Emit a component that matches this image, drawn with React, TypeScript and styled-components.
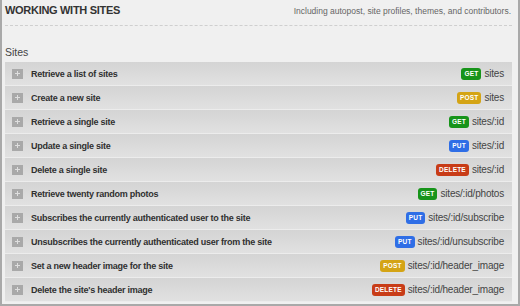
import React from 'react';
import styled, { createGlobalStyle } from 'styled-components';

type Method = 'GET' | 'POST' | 'PUT' | 'DELETE';

interface Endpoint {
  title: string;
  method: Method;
  path: string;
}

const endpoints: Endpoint[] = [
  { title: 'Retrieve a list of sites', method: 'GET', path: 'sites' },
  { title: 'Create a new site', method: 'POST', path: 'sites' },
  { title: 'Retrieve a single site', method: 'GET', path: 'sites/:id' },
  { title: 'Update a single site', method: 'PUT', path: 'sites/:id' },
  { title: 'Delete a single site', method: 'DELETE', path: 'sites/:id' },
  { title: 'Retrieve twenty random photos', method: 'GET', path: 'sites/:id/photos' },
  { title: 'Subscribes the currently authenticated user to the site', method: 'PUT', path: 'sites/:id/subscribe' },
  { title: 'Unsubscribes the currently authenticated user from the site', method: 'PUT', path: 'sites/:id/unsubscribe' },
  { title: 'Set a new header image for the site', method: 'POST', path: 'sites/:id/header_image' },
  { title: "Delete the site's header image", method: 'DELETE', path: 'sites/:id/header_image' },
];

const methodColors: Record<Method, string> = {
  GET: '#17941a',
  POST: '#d4a415',
  PUT: '#2f6ee6',
  DELETE: '#c83c17',
};

const GlobalStyle = createGlobalStyle`
  html, body {
    margin: 0;
    padding: 0;
    background: #eeeeee;
  }
  * {
    box-sizing: border-box;
  }
`;

const Frame = styled.div`
  width: 520px;
  height: 306px;
  background: #f0f0f0;
  border: 2px solid #a9a9a9;
  border-top: none;
  padding: 0 6px 0 3px;
  font-family: 'Liberation Sans', Arial, sans-serif;
  overflow: hidden;
`;

// title row with the dashed rule under it
const Header = styled.div`
  display: flex;
  justify-content: space-between;
  align-items: baseline;
  padding-top: 4px;
  padding-bottom: 7px;
  border-bottom: 1px dashed #cfcfcf;
`;

const Title = styled.h2`
  margin: 0;
  font-size: 11px;
  font-weight: 700;
  color: #333;
  line-height: 13px;
  letter-spacing: -0.3px;
`;

const Subtitle = styled.div`
  font-size: 8.5px;
  color: #666;
  line-height: 13px;
  padding-right: 1px;
`;

const SectionLabel = styled.div`
  font-size: 10.5px;
  color: #444;
  margin-top: 20px;
  margin-bottom: 4px;
  line-height: 12px;
`;

const List = styled.div`
  display: flex;
  flex-direction: column;
`;

const Row = styled.div`
  display: flex;
  align-items: center;
  height: 24px;
  padding: 0 8px 0 7px;
  background: linear-gradient(#d4d4d4, #e1e1e1);
  border-bottom: 1px solid #ececec;
`;

const PlusIcon = styled.span`
  position: relative;
  width: 11px;
  height: 10px;
  background: #a9a9a9;
  flex-shrink: 0;

  &::before,
  &::after {
    content: '';
    position: absolute;
    background: #dedede;
  }
  &::before {
    left: 3px;
    top: 4.5px;
    width: 5px;
    height: 1px;
  }
  &::after {
    left: 5px;
    top: 2.5px;
    width: 1px;
    height: 5px;
  }
`;

const RowTitle = styled.span`
  margin-left: 8px;
  font-size: 9px;
  font-weight: 700;
  color: #303030;
  letter-spacing: -0.25px;
  flex: 1;
  white-space: nowrap;
`;

const Badge = styled.span<{ $method: Method }>`
  display: inline-flex;
  align-items: center;
  height: 12px;
  padding: 0 3px;
  border-radius: 3px;
  background: ${(p) => methodColors[p.$method]};
  color: #fff;
  font-size: 6.5px;
  font-weight: 700;
  letter-spacing: 0.2px;
`;

const Path = styled.span`
  margin-left: 3px;
  font-size: 10px;
  color: #444;
  letter-spacing: -0.2px;
  white-space: nowrap;
`;

export default function App() {
  return (
    <>
      <GlobalStyle />
      <Frame>
        <Header>
          <Title>WORKING WITH SITES</Title>
          <Subtitle>Including autopost, site profiles, themes, and contributors.</Subtitle>
        </Header>
        <SectionLabel>Sites</SectionLabel>
        <List>
          {endpoints.map((e) => (
            <Row key={e.method + e.path + e.title}>
              <PlusIcon />
              <RowTitle>{e.title}</RowTitle>
              <Badge $method={e.method}>{e.method}</Badge>
              <Path>{e.path}</Path>
            </Row>
          ))}
        </List>
      </Frame>
    </>
  );
}
